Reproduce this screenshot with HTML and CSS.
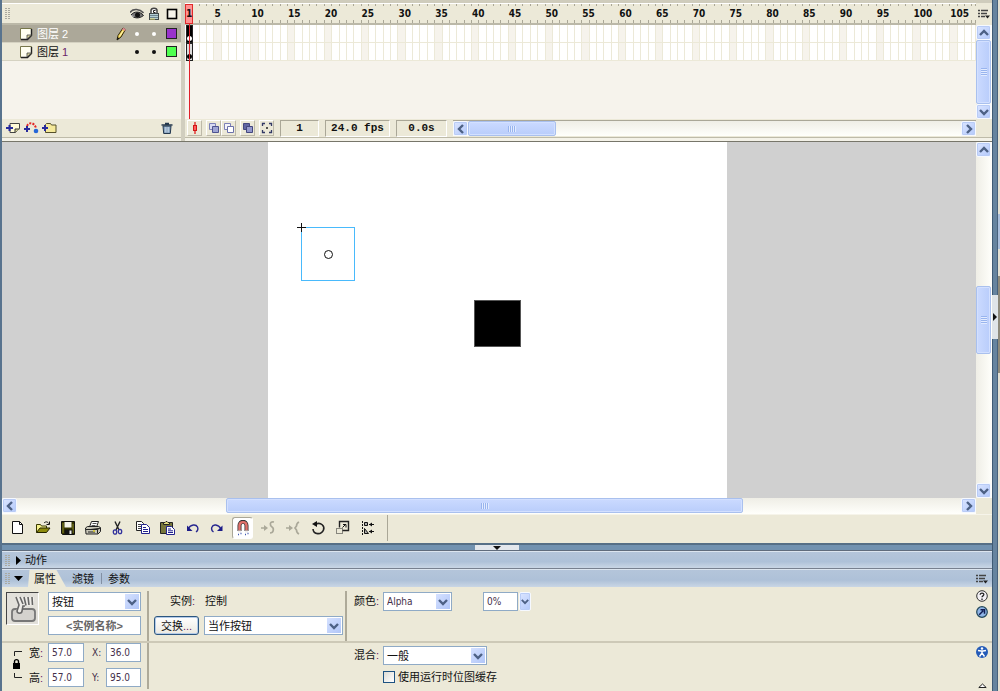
FILE: index.html
```html
<!DOCTYPE html>
<html lang="zh-CN">
<head>
<meta charset="utf-8">
<title>图层</title>
<link rel="stylesheet" href="styles.css">
</head>
<body>
<svg class="defs" aria-hidden="true">
  <symbol id="down" viewBox="0 0 10 8"><path d="M1 2l4 4 4-4" fill="none" stroke="#4d6185" stroke-width="2.4"/></symbol>
  <symbol id="up" viewBox="0 0 10 8"><path d="M1 6l4-4 4 4" fill="none" stroke="#4d6185" stroke-width="2.4"/></symbol>
  <symbol id="left" viewBox="0 0 8 10"><path d="M6 1L2 5l4 4" fill="none" stroke="#4d6185" stroke-width="2.4"/></symbol>
  <symbol id="right" viewBox="0 0 8 10"><path d="M2 1l4 4-4 4" fill="none" stroke="#4d6185" stroke-width="2.4"/></symbol>
  <symbol id="page" viewBox="0 0 14 14"><path d="M1.500 1.500h11v7l-4 4h-7z" fill="#fffff0" stroke="#77774a"/><path d="M12.500 2v6.500l-4 4H2" fill="none" stroke="#222" stroke-width="1.400"/><path d="M8 12V8h4.500z" fill="#d8d49a" stroke="#444" stroke-width=".8"/></symbol>
  <symbol id="menu" viewBox="0 0 12 10"><path d="M0 1.500h2M0 4.500h2M0 7.500h2M3 1.500h7M3 4.500h6M3 7.500h4" stroke="#444" stroke-width="1.300"/><path d="M7 6.500h5L9.500 9.500z" fill="#222"/></symbol>
</svg>

<main class="app">
  <section class="timeline" aria-label="时间轴">
    <div class="layers">
      <div class="layer-row layer-head">
        <span class="grip"></span>
        <span></span>
        <span></span>
        <button class="plain" aria-label="显示/隐藏"><svg width="14" height="12" viewBox="0 0 14 12"><path d="M0 4.500C3 0 10 1 13.500 5" fill="none" stroke="#555" stroke-width="1.600"/><path d="M1 7c3-4 9-4 12.500.5C9 11 4 10.500 1 7z" fill="#777" stroke="#222"/><circle cx="7.500" cy="7" r="2.500" fill="#111"/><path d="M1 7.500l2.500 1" stroke="#ddd"/></svg></button>
        <button class="plain" aria-label="锁定"><svg width="12" height="14" viewBox="0 0 12 14"><path d="M3 6V3.500C3 .5 9 .5 9 3.500V6" fill="#fff" stroke="#444" stroke-width="1.500"/><path d="M7.500 3.500H5.500v2h2" fill="none" stroke="#222"/><rect x="1.500" y="6.500" width="9" height="6" fill="#b4cfd6" stroke="#40484a"/><path d="M2 8.500h8M2 10.500h8" stroke="#6f8790"/><path d="M2 12h5" stroke="#e2d66c"/></svg></button>
        <button class="plain" aria-label="轮廓"><svg width="12" height="12" viewBox="0 0 12 12"><rect x="1.500" y="1.500" width="9" height="9" fill="#f6f4ea" stroke="#000" stroke-width="1.600"/></svg></button>
      </div>
      <div class="layer-row selected">
        <svg class="page-icon" width="14" height="14"><use href="#page"/></svg>
        <span class="layer-name">图层 2</span>
        <svg width="12" height="14" viewBox="0 0 12 14"><path d="M2 13l1-4.500L8 1l2.500 1.500L6 10z" fill="#f3d34d" stroke="#332b10"/><path d="M7 2.500L8.300.8l2.600 1.500-1 1.700z" fill="#dd8b91"/><path d="M2 13l.5-3 2 1.500z" fill="#111"/><path d="M8 4L4.500 9.500" stroke="#fff9c0"/></svg>
        <span class="dot"></span><span class="dot"></span><span class="swatch purple"></span>
      </div>
      <div class="layer-row">
        <svg class="page-icon" width="14" height="14"><use href="#page"/></svg>
        <span class="layer-name">图层 <b class="num">1</b></span>
        <span></span>
        <span class="dot"></span><span class="dot"></span><span class="swatch green"></span>
      </div>
      <div class="layer-empty"></div>
      <div class="layer-tools">
        <button class="plain" aria-label="插入图层"><svg width="15" height="12" viewBox="0 0 15 12"><path d="M4 1.500h9.500v5l-4 4H4z" fill="#fffbd8" stroke="#444"/><path d="M9 10.500V7h4.500" fill="#d8d49a" stroke="#333"/><path d="M0 6h7M3.500 3v6" stroke="#272a9c" stroke-width="2"/></svg></button>
        <button class="plain" aria-label="添加引导层"><svg width="15" height="12" viewBox="0 0 15 12"><path d="M3 4C5 0 10 0 12 6" fill="none" stroke="#e22525" stroke-width="2" stroke-dasharray="2 1.300"/><circle cx="12" cy="9" r="2.300" fill="#2667d8"/><path d="M0 7h6M3 4v6" stroke="#272a9c" stroke-width="2"/></svg></button>
        <button class="plain" aria-label="插入图层文件夹"><svg width="15" height="12" viewBox="0 0 15 12"><path d="M3.500 10.500v-8l1-1h4l1 1.500h4.500v7.500z" fill="#f5e99a" stroke="#55502a"/><path d="M0 6h6M3 3v6" stroke="#272a9c" stroke-width="2"/></svg></button>
        <button class="plain trash" aria-label="删除图层"><svg width="12" height="12" viewBox="0 0 12 12"><path d="M2 4h8l-.7 7.500H2.700z" fill="#7d9ab9" stroke="#24384e"/><path d="M.5 3h11M4 1.500h4" stroke="#24384e" stroke-width="1.500"/><path d="M4.300 5v5.500M6 5v5.500M7.700 5v5.500" stroke="#dfeaf4" stroke-width=".7"/></svg></button>
      </div>
    </div>

    <div class="frames">
      <div class="ruler frame-grid" id="ruler"></div>
      <div class="frame-row frame-grid"></div>
      <div class="frame-row frame-grid"></div>
      <div class="frames-empty"></div>
      <span class="playhead">1</span>
      <span class="key key-on"></span>
      <span class="key key-off"></span>
      <span class="playline"></span>
      <div class="frame-tools">
        <button class="tool" aria-label="滚动到播放头"><svg width="12" height="12" viewBox="0 0 12 12"><path d="M6 0v12" stroke="#e02020" stroke-width="1.300"/><rect x="4.500" y="3.500" width="3" height="5" fill="#ff5b5b" stroke="#d01818"/></svg></button>
        <button class="tool gap" aria-label="绘图纸外观"><svg width="12" height="12" viewBox="0 0 12 12"><path d="M1.500 1.500h6v6h-6z" fill="#d7daf2" stroke="#7c80b8"/><path d="M4.500 4.500h6v6h-6z" fill="#9ea4d4" stroke="#4d5290"/></svg></button>
        <button class="tool" aria-label="绘图纸外观轮廓"><svg width="12" height="12" viewBox="0 0 12 12"><path d="M1.500 1.500h6v6h-6z" fill="#f4f4fa" stroke="#7c80b8"/><path d="M4.500 4.500h6v6h-6z" fill="#fff" stroke="#6b70aa"/></svg></button>
        <button class="tool gap" aria-label="编辑多个帧"><svg width="12" height="12" viewBox="0 0 12 12"><path d="M1.500 1.500h6v6h-6z" fill="#6166a3" stroke="#43477f"/><path d="M4.500 4.500h6v6h-6z" fill="#9398cc" stroke="#43477f"/></svg></button>
        <button class="tool gap" aria-label="修改绘图纸标记"><svg width="12" height="12" viewBox="0 0 12 12"><path d="M4 1.500H1.500V4M1.500 8v2.500H4M8 1.500h2.500V4M10.500 8v2.500H8" fill="none" stroke="#333a66" stroke-width="1.300"/><circle cx="6" cy="6" r="1" fill="#222"/></svg></button>
        <output class="field field-s">1</output>
        <output class="field field-l">24.0 fps</output>
        <output class="field field-m">0.0s</output>
        <div class="hbar">
          <button class="sbtn" aria-label="向左"><svg width="8" height="10"><use href="#left"/></svg></button>
          <span class="thumb-h thumb-short"></span>
          <span class="fill"></span>
          <button class="sbtn" aria-label="向右"><svg width="8" height="10"><use href="#right"/></svg></button>
        </div>
      </div>
    </div>

    <div class="timeline-side">
      <button class="plain side-menu" aria-label="选项"><svg width="12" height="10"><use href="#menu"/></svg></button>
      <div class="vbar">
        <button class="sbtn" aria-label="向上"><svg width="10" height="8"><use href="#up"/></svg></button>
        <span class="thumb-v fill"></span>
        <button class="sbtn" aria-label="向下"><svg width="10" height="8"><use href="#down"/></svg></button>
      </div>
    </div>
  </section>

  <section class="stage" aria-label="舞台">
    <div class="pasteboard">
      <div class="canvas">
        <div class="symbol"></div>
        <svg class="cross" width="9" height="9" viewBox="0 0 9 9"><path d="M0 4.500h9M4.500 0v9" stroke="#111"/></svg>
        <div class="block"></div>
      </div>
    </div>
    <div class="vbar">
      <button class="sbtn" aria-label="向上"><svg width="10" height="8"><use href="#up"/></svg></button>
      <span class="fill"></span>
      <span class="thumb-v thumb-stage"></span>
      <span class="fill"></span>
      <button class="sbtn" aria-label="向下"><svg width="10" height="8"><use href="#down"/></svg></button>
    </div>
  </section>
  <div class="hbar stage-hbar">
    <button class="sbtn" aria-label="向左"><svg width="8" height="10"><use href="#left"/></svg></button>
    <span class="before-thumb"></span>
    <span class="thumb-h thumb-wide"></span>
    <span class="after-thumb"></span>
    <button class="sbtn" aria-label="向右"><svg width="8" height="10"><use href="#right"/></svg></button>
  </div>

  <nav class="toolbar" aria-label="主工具栏">
    <button class="tb" aria-label="新建"><svg width="16" height="16" viewBox="0 0 16 16"><path d="M2.500 1.500h7l3 3v9h-10z" fill="#fff" stroke="#111"/><path d="M9.500 1.500v3h3" fill="none" stroke="#111"/></svg></button>
    <button class="tb" aria-label="打开"><svg width="16" height="16" viewBox="0 0 16 16"><path d="M1.500 12.500v-8h4l1 1.500h5v2" fill="#f5f18c" stroke="#3b3b00"/><path d="M1.500 12.500L5 8h10l-3.500 4.500z" fill="#8d8b0c" stroke="#222200"/><path d="M9 3c2-2 4-1 4.500.5M14.500 1.500v3h-3" fill="none" stroke="#111"/></svg></button>
    <button class="tb" aria-label="保存"><svg width="16" height="16" viewBox="0 0 16 16"><path d="M1.500 1.500h13v13h-12l-1-1z" fill="#343400" stroke="#111"/><path d="M4.500 2h7v5.500h-7z" fill="#f4f4e8"/><path d="M3 3v10M13 4v9" stroke="#85852a"/><path d="M4.500 9.500h8V14h-8z" fill="#111"/><path d="M9.500 10.500h2V14h-2z" fill="#eee"/></svg></button>
    <button class="tb" aria-label="打印"><svg width="16" height="16" viewBox="0 0 16 16"><path d="M4.500 7l2-5.500h7L11.500 7" fill="#fff" stroke="#222"/><path d="M7.500 3.500h4M6.500 5.500h4" stroke="#555"/><path d="M.5 8l2-1.500h11l2 1v4l-2.500 2.500h-12z" fill="#c8c6b8" stroke="#222"/><path d="M1 9.500h11.500L15 8M3 12h7M12.500 10v3.500" stroke="#222"/><path d="M8 11h2" stroke="#d8ca25" stroke-width="1.500"/></svg></button>
    <button class="tb" aria-label="剪切"><svg width="16" height="16" viewBox="0 0 16 16"><path d="M5 1.500l4 8.500M10 1.500l-4 8.500" stroke="#222" stroke-width="1.400"/><ellipse cx="5" cy="12" rx="1.700" ry="2.200" fill="none" stroke="#32329d" stroke-width="1.300"/><ellipse cx="10" cy="11.500" rx="1.700" ry="2.200" fill="none" stroke="#32329d" stroke-width="1.300"/></svg></button>
    <button class="tb" aria-label="复制"><svg width="16" height="16" viewBox="0 0 16 16"><path d="M1.500 1.500h5l2 2v7h-7z" fill="#fff" stroke="#222"/><path d="M3 4.500h3M3 6.500h4M3 8.500h4" stroke="#444"/><path d="M6.500 4.500h5l3 3v6h-8z" fill="#fff" stroke="#23238e"/><path d="M8 7.500h3M8 9.500h5M8 11.500h5" stroke="#23238e"/></svg></button>
    <button class="tb" aria-label="粘贴"><svg width="16" height="16" viewBox="0 0 16 16"><path d="M.5 2.500h12v11H.5z" fill="#77763c" stroke="#222"/><path d="M3.500 4.500v-2h1.500l1-1h1l1 1h1.500v2z" fill="#e6df80" stroke="#222"/><path d="M6.500 6.500h5l3 3v5h-8z" fill="#fff" stroke="#23238e"/><path d="M8 9h3M8 10.800h5M8 12.500h5" stroke="#23238e"/></svg></button>
    <button class="tb" aria-label="撤消"><svg width="16" height="16" viewBox="0 0 16 16"><path d="M3 9c3-5 8-5 9.500-2 .8 2 0 4-1.500 5" fill="none" stroke="#27278f" stroke-width="1.400"/><path d="M2 5.500V11h5.500z" fill="#1c1c88"/></svg></button>
    <button class="tb" aria-label="重做"><svg width="16" height="16" viewBox="0 0 16 16"><path d="M11 9C8 4 3 4 2 7c-.8 2 0 4 1.500 5" fill="none" stroke="#27278f" stroke-width="1.400"/><path d="M12.500 5.500V11H7z" fill="#1c1c88"/></svg></button>
    <button class="tb pressed" aria-label="贴紧至对象"><svg width="16" height="16" viewBox="0 0 16 16"><path d="M4.500 11V5.500c0-5 7-5 7 0V11" fill="none" stroke="#333" stroke-width="4"/><path d="M4.500 10.500v-5c0-4.500 7-4.500 7 0v5" fill="none" stroke="#e2726c" stroke-width="2.400"/><path d="M3 11.500h3M10 11.500h3" stroke="#eee" stroke-width="2"/><path d="M3 14.500h1M5.500 13.500h1M10 14.500h1M12.500 13.500h1" stroke="#3b54b0" stroke-width="1.300"/></svg></button>
    <button class="tb" aria-label="平滑"><svg width="16" height="16" viewBox="0 0 16 16"><path d="M1 8h4" stroke="#aaa899" stroke-width="1.500"/><path d="M4 5l4 3-4 3z" fill="#aaa899"/><path d="M14 2c-5-1-4 4-2 5s2 6-2 6" fill="none" stroke="#aaa899" stroke-width="1.700"/></svg></button>
    <button class="tb" aria-label="伸直"><svg width="16" height="16" viewBox="0 0 16 16"><path d="M1 8h4" stroke="#aaa899" stroke-width="1.500"/><path d="M4 5l4 3-4 3z" fill="#aaa899"/><path d="M14 2c-2 1-2.500 2.500-2.500 4L10 8l1.500 2c0 1.500.5 3 2.500 4" fill="none" stroke="#aaa899" stroke-width="1.700"/></svg></button>
    <button class="tb" aria-label="旋转与倾斜"><svg width="16" height="16" viewBox="0 0 16 16"><path d="M6 4c5-2 9 2 7.500 6-2 5-10 5-10.500-1" fill="none" stroke="#222" stroke-width="1.600"/><path d="M2 4l5-3v6z" fill="#111"/></svg></button>
    <button class="tb" aria-label="缩放"><svg width="16" height="16" viewBox="0 0 16 16"><path d="M7.500 10.500h6v-9h-9v6" fill="none" stroke="#222" stroke-width="1.400"/><path d="M1.500 8.500h6v5h-6z" fill="none" stroke="#222" stroke-dasharray="1 1"/><path d="M7.500 7.500l3.500-3.500M8 4.500h3v3" fill="none" stroke="#111"/></svg></button>
    <button class="tb" aria-label="对齐"><svg width="16" height="16" viewBox="0 0 16 16"><path d="M2.500 1v14" stroke="#111" stroke-dasharray="2 1"/><path d="M4.500 2.500h3v3h-3zM4.500 13.500v-5l4 5z" fill="#aaa" stroke="#111"/><path d="M9 4.500h5M9 11.500h5" stroke="#111"/><path d="M12 2.500L9 4.500l3 2zM12 9.500l-3 2 3 2z" fill="#111"/></svg></button>
    <span class="tb-line"></span>
  </nav>

  <div class="splitter"><button class="collapse" aria-label="折叠面板"><svg width="8" height="4" viewBox="0 0 8 4"><path d="M0 0h8L4 4z" fill="#111"/></svg></button></div>

  <div class="panel-bar">
    <span class="grip"></span>
    <button class="plain title"><svg width="9" height="9" viewBox="0 0 9 9"><path d="M2 0l5 4.500L2 9z" fill="#000"/></svg>动作</button>
  </div>
  <div class="panel-bar tab-bar">
    <span class="grip"></span>
    <button class="plain toggle" aria-label="折叠"><svg width="9" height="9" viewBox="0 0 9 9"><path d="M0 2h9L4.500 7z" fill="#000"/></svg></button>
    <button class="plain tab active">属性</button>
    <button class="plain tab">滤镜</button>
    <span class="tab-line"></span>
    <button class="plain tab">参数</button>
    <button class="plain bar-menu" aria-label="选项"><svg width="12" height="10"><use href="#menu"/></svg></button>
  </div>

  <section class="props" aria-label="属性">
    <div class="props-row props-top">
      <div class="kind">
        <div class="kind-icon"><svg width="30" height="30" viewBox="0 0 30 30"><rect x="4" y="15" width="23" height="12" rx="3" fill="#d4d2ce" stroke="#777" stroke-width="1.800"/><path d="M8 3l2 9-2 5 1 3 4-1 2-5 4-2 7-1V3z" fill="#eeece8"/><path d="M8 3l3 8-2 6c0 3 5 3 5 0l1-5h2M12 3l3 7M16 3l2 8.500M20 3l1 8M24 3l.5 8" fill="none" stroke="#666" stroke-width="1.600"/></svg></div>
        <div class="stack">
          <div class="select kind-w"><select aria-label="类型"><option>按钮</option></select><span class="arrow"><svg width="10" height="8"><use href="#down"/></svg></span></div>
          <input class="box kind-w center" aria-label="实例名称" placeholder="&lt;实例名称&gt;">
        </div>
      </div>
      <div class="instance">
        <div class="line"><span class="inst-label">实例<b class="num">:</b></span><span>控制</span></div>
        <div class="line swap-line">
          <button class="swap">交换<b class="num">...</b></button>
          <div class="select fill"><select aria-label="行为"><option>当作按钮</option></select><span class="arrow"><svg width="10" height="8"><use href="#down"/></svg></span></div>
        </div>
      </div>
      <div class="colour">
        <label for="colour">颜色<b class="num">:</b></label>
        <div class="select colour-w"><select id="colour" class="latin"><option>Alpha</option></select><span class="arrow"><svg width="10" height="8"><use href="#down"/></svg></span></div>
        <input class="box latin alpha" aria-label="Alpha 值" value="0%">
        <button class="sbtn slim" aria-label="调整"><svg width="8" height="7"><use href="#down"/></svg></button>
      </div>
      <div class="helpers">
        <button class="plain" aria-label="帮助"><svg width="12" height="12" viewBox="0 0 12 12"><circle cx="6" cy="6" r="5.300" fill="#f2f0f4" stroke="#333"/><path d="M4.200 4.800c0-2.500 3.800-2.200 3.600 0C7.700 6 6 5.800 6 7.300M6 8.500V10" fill="none" stroke="#222" stroke-width="1.300"/></svg></button>
        <button class="plain" aria-label="编辑"><svg width="12" height="12" viewBox="0 0 12 12"><circle cx="6" cy="6" r="5.300" fill="#8fb4e6" stroke="#22475a" stroke-width="1.200"/><path d="M3.200 8.800l4-4M4.500 3.700h4v4" fill="none" stroke="#101c52" stroke-width="1.500"/></svg></button>
      </div>
    </div>
    <div class="props-row props-bottom">
      <div class="geometry">
        <svg class="ratio" width="12" height="32" viewBox="0 0 12 32"><path d="M2.500 7V2.500H10M2.500 24v4.500H10" fill="none" stroke="#222"/><rect x="1" y="14" width="7" height="6" fill="#000"/><path d="M2.500 14v-1.500c0-2.500 4-2.500 4 0V14" fill="none" stroke="#000" stroke-width="1.400"/></svg>
        <label for="w">宽<b class="num">:</b></label><input id="w" class="box latin" value="57.0">
        <label for="x" class="latin">X:</label><input id="x" class="box latin" value="36.0">
        <label for="h">高<b class="num">:</b></label><input id="h" class="box latin" value="57.0">
        <label for="y" class="latin">Y:</label><input id="y" class="box latin" value="95.0">
      </div>
      <div class="blend">
        <div class="line"><label for="blend">混合<b class="num">:</b></label>
          <div class="select blend-w"><select id="blend"><option>一般</option></select><span class="arrow"><svg width="10" height="8"><use href="#down"/></svg></span></div></div>
        <label class="cache"><input type="checkbox">使用运行时位图缓存</label>
      </div>
      <div class="helpers spread">
        <button class="plain" aria-label="辅助功能"><svg width="12" height="12" viewBox="0 0 12 12"><circle cx="6" cy="6" r="6" fill="#245bb8"/><circle cx="6" cy="2.500" r="1.200" fill="#fff"/><path d="M2 4.500l3 .5h2l3-.5M6 5v2L3.500 10.500M6 7l2.500 3.500" fill="none" stroke="#fff" stroke-width="1.400"/></svg></button>
        <button class="plain" aria-label="收起"><svg width="9" height="6" viewBox="0 0 9 6"><path d="M.8 4.500h7.400L4.500 1z" fill="#fff" stroke="#222"/></svg></button>
      </div>
    </div>
  </section>
</main>

<aside class="edge"><button class="collapse-side" aria-label="折叠侧栏"><svg width="4" height="8" viewBox="0 0 4 8"><path d="M0 0l4 4-4 4z" fill="#111"/></svg></button></aside>
<script src="frames.js"></script>
</body>
</html>
```

FILE: frames.js
```js
const FRAMES = 108;

document.querySelectorAll('.frame-grid').forEach((row) => {
  const ruler = row.classList.contains('ruler');
  for (let n = 1; n <= FRAMES; n++) {
    const cell = document.createElement('span');
    cell.className = ruler ? 'tick' : 'frame';
    if (n % 5 === 0) {
      cell.classList.add('fifth');
      if (ruler) cell.textContent = n;
    }
    if (n === FRAMES) cell.classList.add('half');
    row.append(cell);
  }
});
```

FILE: styles.css
```css
*, *::before, *::after { box-sizing: border-box; }

body {
  margin: 0;
  display: flex;
  min-height: 100vh;
  border-left: 2px solid #58738e;
  background: #ece9d8;
  color: #111;
  font: 11px/14px "Liberation Sans", "Noto Sans CJK SC", sans-serif;
}

button, input, select { font: inherit; color: inherit; margin: 0; }
svg { display: block; flex: none; }
.defs { position: absolute; width: 0; height: 0; }
.num { font-weight: normal; color: #6a2468; }
.latin { font-family: "DejaVu Sans Condensed", "DejaVu Sans", sans-serif; font-size: 10px; color: #45304a; }
.fill { flex: 1; min-width: 0; min-height: 0; }

.plain {
  display: flex;
  align-items: center;
  justify-content: center;
  padding: 0;
  border: 0;
  background: none;
}

.app { flex: 1; min-width: 0; display: flex; flex-direction: column; }

.grip {
  width: 5px;
  height: 11px;
  background: repeating-linear-gradient(to bottom, #aaa99f 0 1px, transparent 1px 2px) left / 2px 100% no-repeat,
    repeating-linear-gradient(to bottom, #aaa99f 0 1px, transparent 1px 2px) right / 2px 100% no-repeat;
}

/* Timeline */
.timeline {
  display: grid;
  grid-template-columns: 183px minmax(0, 1fr) 16px;
  height: 142px;
  border-top: 3px solid #cfccbc;
  border-bottom: 1px solid #77766a;
  box-shadow: inset 0 -3px #f4f2e8, inset 0 -4px #bebba9;
}

.layers { display: flex; flex-direction: column; border-right: 4px solid #d1cebf; padding-bottom: 4px; }

.layer-row {
  display: grid;
  grid-template-columns: 35px 76px 15px 17px 17px 19px;
  align-items: center;
  justify-items: center;
  height: 18px;
  border-bottom: 1px solid #d5d2c2;
}
.layer-head { height: 22px; border-top: 1px solid #fff; border-bottom: 2px solid #bbb8a8; }
.layer-head .grip { justify-self: start; margin-left: 3px; }
.selected { background: #aca899; color: #fff; }
.page-icon { justify-self: end; margin-right: 4px; }
.layer-name { justify-self: start; }
.dot { width: 4px; height: 4px; border-radius: 50%; background: currentColor; }
.swatch { width: 11px; height: 11px; border: 1px solid #222; }
.purple { background: #9932cc; }
.green { background: #4fff4f; }
.layer-empty, .frames-empty { flex: 1; background: #f6f3ec; }
.layer-tools { display: flex; align-items: center; gap: 3px; height: 18px; padding: 0 8px 0 4px; }
.trash { margin-left: auto; }

.frames { position: relative; display: flex; flex-direction: column; padding-bottom: 4px; min-width: 0; }
.frame-grid { display: grid; grid-template-columns: repeat(215, minmax(0, 1fr)); }
.frame-grid > * { grid-column: span 2; min-width: 0; }
.frame-grid > .half { grid-column: span 1; }

.ruler {
  height: 22px;
  overflow: hidden;
  border-top: 1px solid #fff;
  border-bottom: 2px solid #bbb8a8;
  font: bold 10px/19px "DejaVu Sans Condensed", "DejaVu Sans", sans-serif;
}
.tick {
  white-space: nowrap;
  background: linear-gradient(#aaa797, #aaa797) right top / 1px 2px no-repeat,
    linear-gradient(#aaa797, #aaa797) right bottom / 1px 3px no-repeat;
}
.frame-row { height: 18px; background: #fff; border-bottom: 1px solid #ece9d8; }
.frame { border-right: 1px solid #ece9d8; }
.frame.fifth { background: #f6f3ec; }

.playhead {
  position: absolute;
  left: 0;
  top: 1px;
  width: 8px;
  height: 20px;
  border: 1px solid #e02a2a;
  background: #ff9292;
  font: bold 10px/17px "DejaVu Sans Condensed", "DejaVu Sans", sans-serif;
  text-align: center;
}
.playline { position: absolute; left: 4px; top: 21px; width: 1px; height: 95px; background: #e0202a; }
.key { position: absolute; left: 1px; width: 7px; height: 18px; border: 1px solid #222; }
.key::after {
  content: "";
  position: absolute;
  left: 0;
  bottom: 1px;
  width: 5px;
  height: 5px;
  border-radius: 50%;
  background: currentColor;
}
.key-on { top: 22px; background: #000; color: #fff; }
.key-off { top: 40px; background: #ddd; color: #000; }

.frame-tools { display: flex; align-items: center; height: 18px; padding-left: 2px; }
.tool {
  display: grid;
  place-items: center;
  width: 15px;
  height: 16px;
  padding: 0;
  border: 1px solid;
  border-color: #fff #bdb9a8 #bdb9a8 #fff;
  background: #ece9d8;
}
.gap { margin-left: 4px; }
.field {
  height: 17px;
  margin-left: 6px;
  border: 1px solid;
  border-color: #aaa797 #fff #fff #aaa797;
  font: bold 11px/15px "Liberation Mono", monospace;
  text-align: center;
}
.field-s { width: 39px; }
.field-l { width: 65px; }
.field-m { width: 51px; }
.frame-tools .hbar { flex: 1; margin-left: 6px; border-top: 1px solid #aaa797; }

.timeline-side { display: flex; flex-direction: column; padding-bottom: 22px; }
.side-menu { height: 22px; }

/* Scroll bars */
.hbar, .vbar { display: flex; background: #f8f7f1; }
.hbar { height: 16px; background: linear-gradient(#efeee6, #fffffb); }
.vbar { flex-direction: column; width: 16px; background: linear-gradient(to right, #efeee6, #fffffb); }
.timeline-side .vbar { flex: 1; }
.sbtn {
  display: grid;
  place-items: center;
  flex: none;
  width: 15px;
  height: 15px;
  padding: 0;
  border: 1px solid #f6f9ff;
  border-radius: 2px;
  background: linear-gradient(135deg, #dbe5ff, #b3c9fb);
  box-shadow: inset 0 0 0 1px #b9ccf6;
}
.slim { width: 12px; height: 19px; }
.thumb-h, .thumb-v {
  border: 1px solid #a9c0ee;
  border-radius: 2px;
  box-shadow: inset 0 0 0 1px #d3e0ff;
}
.thumb-h {
  height: 15px;
  background: repeating-linear-gradient(to right, #98b4ee 0 1px, #e2ebff 1px 2px) center / 8px 6px no-repeat,
    linear-gradient(#cbdaff, #b9cdfb);
}
.thumb-v {
  width: 15px;
  background: repeating-linear-gradient(to bottom, #98b4ee 0 1px, #e2ebff 1px 2px) center / 6px 8px no-repeat,
    linear-gradient(to right, #cbdaff, #b9cdfb);
}
.thumb-short { width: 88px; }
.before-thumb { flex: 209; }
.thumb-wide { flex: 517; }
.after-thumb { flex: 218; }
.thumb-stage { flex: 0 1 68px; }

/* Stage */
.stage { flex: 1; display: flex; min-height: 200px; }
.pasteboard {
  flex: 1;
  display: grid;
  grid-template-columns: 266fr 459fr 249fr;
  background: #d0d0d0;
}
.canvas { grid-column: 2; position: relative; background: #fff; }
.symbol { position: absolute; left: 33px; top: 85px; width: 54px; height: 54px; border: 1px solid #49bafc; }
.symbol::after {
  content: "";
  position: absolute;
  left: 22px;
  top: 22px;
  width: 9px;
  height: 9px;
  border: 1px solid #111;
  border-radius: 50%;
}
.cross { position: absolute; left: 29px; top: 81px; }
.block { position: absolute; left: 206px; top: 158px; width: 47px; height: 47px; background: #000; border: 1px solid #555; }
.stage-hbar { margin-right: 16px; }

/* Main toolbar */
.toolbar { display: flex; align-items: center; height: 29px; padding: 0 0 2px 3px; border-top: 1px solid #f6f4ea; }
.tb { display: grid; place-items: center; width: 25px; height: 24px; padding: 0; border: 0; background: none; }
.pressed { width: 21px; height: 22px; margin: 0 2px; background: #fff; border: 1px solid; border-color: #aaa797 #fff #fff #aaa797; border-radius: 3px; }
.tb-line { width: 1px; height: 26px; margin-left: 7px; background: #aaa797; }

.splitter {
  display: flex;
  justify-content: center;
  height: 8px;
  border-top: 2px solid #566f86;
  border-bottom: 1px solid #606c7c;
  background: #7292b0;
}
.collapse { display: grid; place-items: center; width: 44px; padding: 0; border: 0; background: #e3e7ec; }

/* Panels */
.panel-bar {
  display: flex;
  align-items: center;
  height: 18px;
  padding-left: 3px;
  border-top: 1px solid #dce5ef;
  border-bottom: 1px solid #77808f;
  background: linear-gradient(#b4c5da, #aec1d8 60%, #c9d6e5);
}
.title { gap: 2px; margin-left: 4px; }
.tab-bar { border-bottom: 0; }
.toggle { margin-left: 4px; }
.tab { height: 17px; padding: 0 7px 0 6px; }
.active { width: 38px; margin-left: 5px; justify-content: flex-start; background: #ece9d8; clip-path: polygon(4% 0, 75% 0, 100% 100%, 0 100%); }
.tab-line { width: 1px; height: 11px; background: #8390a3; }
.bar-menu { margin-left: auto; padding-right: 4px; }

.props { min-height: 104px; }
.props-row { display: flex; }
.props-top { height: 56px; border-bottom: 2px solid #cdc9b7; }
.props-bottom { min-height: 48px; }

.kind { display: flex; gap: 9px; width: 145px; padding: 5px 0 0 4px; }
.kind-icon {
  display: grid;
  place-items: center;
  width: 33px;
  height: 33px;
  border: 1px solid;
  border-color: #444 #fff #fff #444;
  background: #e2e0da;
}
.stack { display: flex; flex-direction: column; gap: 5px; }
.box, .select select {
  height: 19px;
  min-width: 0;
  border: 1px solid #8faac6;
  border-radius: 0;
  background: #fff;
  padding: 0 3px;
}
.select { position: relative; display: flex; }
.select select { appearance: none; width: 100%; padding-right: 16px; }
.arrow {
  position: absolute;
  right: 2px;
  top: 2px;
  display: grid;
  place-items: center;
  width: 14px;
  height: 15px;
  background: linear-gradient(135deg, #d5e1ff, #b1c6f8);
  pointer-events: none;
}
.kind-w { width: 93px; }
.center { text-align: center; }
.box::placeholder { color: #666; opacity: 1; font-weight: bold; }

.line { display: flex; align-items: center; }
.instance { width: 198px; border-left: 2px solid #aeaa99; margin-top: 4px; padding-left: 5px; }
.instance .line { height: 19px; }
.inst-label { margin-left: 16px; width: 35px; }
.instance .swap-line { margin-top: 6px; gap: 5px; padding-right: 2px; }
.swap {
  width: 45px;
  height: 19px;
  padding: 0;
  border: 1px solid #2c5680;
  border-radius: 3px;
  background: linear-gradient(#fff, #ece9e0);
  box-shadow: inset 0 0 0 1px #b4cbe8;
}

.colour { display: flex; align-items: flex-start; margin-top: 4px; padding: 1px 0 0 7px; border-left: 2px solid #aeaa99; }
.colour label, .blend .line > label { width: 29px; line-height: 19px; }
.colour-w { width: 69px; }
.alpha { width: 35px; margin: 0 1px 0 31px; }

.helpers { display: flex; flex-direction: column; gap: 4px; align-items: center; width: 20px; margin-left: auto; padding-top: 3px; }
.spread { justify-content: space-between; padding-bottom: 2px; }

.geometry {
  display: grid;
  grid-template-columns: 17px 19px 36px 22px 35px;
  grid-template-rows: 19px 19px;
  row-gap: 6px;
  width: 145px;
  padding-left: 10px;
  align-items: center;
}
.geometry .box { width: 100%; }
.geometry label.latin { padding-left: 8px; }
.ratio { grid-row: span 2; }

.blend { flex: 1; padding: 3px 0 0 205px; border-left: 2px solid #aeaa99; margin-bottom: 2px; }
.blend-w { width: 104px; }
.cache { display: flex; align-items: center; gap: 3px; margin: 5px 0 0 29px; }
.cache input { appearance: none; width: 12px; height: 12px; border: 1px solid #1d5281; background: linear-gradient(135deg, #dddcd5, #fff); }

/* Window edge */
.edge {
  display: flex;
  align-items: center;
  width: 8px;
  padding-bottom: 57px;
  background: linear-gradient(#e4e1d3 0 31%, #aabfdc 31% 36%, #e4e1d3 36% 40%, #8d8a7c 40% 54%, #e4e1d3 54%) right / 2px 100% no-repeat,
    linear-gradient(to right, #3f5b75 0 1px, #66849f 1px 5px, #48627c 5px);
}
.collapse-side { display: grid; place-items: center; width: 6px; height: 44px; padding: 0; border: 0; background: #dfe4e8; }
```
